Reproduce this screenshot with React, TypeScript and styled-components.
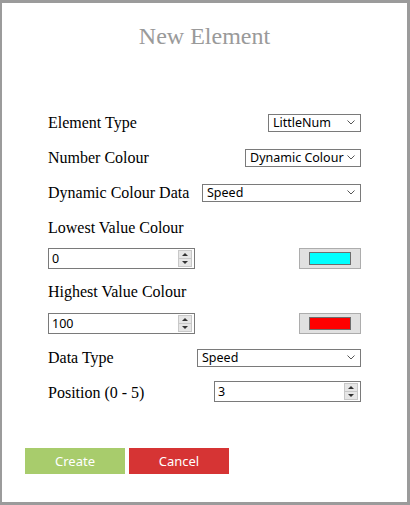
import React from "react";
import styled, { createGlobalStyle } from "styled-components";

const GlobalStyle = createGlobalStyle`
  html, body {
    margin: 0;
    padding: 0;
    background: #ffffff;
  }
`;

const Panel = styled.div`
  box-sizing: border-box;
  width: 410px;
  height: 505px;
  border: 3px solid #9b9b9b;
  border-left-width: 2px;
  background: #ffffff;
  font-family: "Liberation Serif", "Times New Roman", serif;
  color: #000;
`;

const Title = styled.h2`
  margin: 0;
  padding-top: 19px;
  height: 101px;
  box-sizing: border-box;
  text-align: center;
  font-weight: normal;
  font-size: 24px;
  line-height: 28px;
  color: #9a9a9a;
`;

const Form = styled.div`
  display: flex;
  flex-direction: column;
  width: 313px;
  margin-left: 46px;
`;

const Row = styled.div<{ $h: number }>`
  display: flex;
  align-items: center;
  justify-content: space-between;
  height: ${(p) => p.$h}px;
`;

const Label = styled.label`
  font-size: 16px;
  padding-top: 3px;
  white-space: nowrap;
`;

const SelectWrap = styled.div<{ $w: number }>`
  position: relative;
  width: ${(p) => p.$w}px;
  height: 18px;
`;

const Select = styled.select`
  appearance: none;
  box-sizing: border-box;
  width: 100%;
  height: 100%;
  margin: 0;
  padding: 0 14px 0 4px;
  border: 1px solid #7a7a7a;
  border-radius: 0;
  background: #ffffff;
  font-family: "Noto Sans", "Open Sans", sans-serif;
  font-size: 12.5px;
  line-height: 16px;
  color: #000;
  outline: none;
`;

const Chevron = styled.svg`
  position: absolute;
  right: 6px;
  top: 7px;
  width: 8px;
  height: 5px;
  pointer-events: none;
`;

const NumberBox = styled.div<{ $w: number }>`
  box-sizing: border-box;
  display: flex;
  align-items: center;
  width: ${(p) => p.$w}px;
  height: 21px;
  border: 1px solid #7a7a7a;
  background: #ffffff;
  padding-right: 2px;
`;

const NumberInput = styled.input`
  flex: 1;
  min-width: 0;
  border: none;
  outline: none;
  padding: 0 0 0 3px;
  background: transparent;
  font-family: "Noto Sans", "Open Sans", sans-serif;
  font-size: 12.5px;
  color: #000;
`;

const Spinner = styled.div`
  display: flex;
  flex-direction: column;
  width: 12px;
  height: 15px;
  border: 1px solid #c8c8c8;
  background: #e6e6e6;
`;

const SpinHalf = styled.div<{ $down?: boolean }>`
  flex: 1;
  display: flex;
  align-items: center;
  justify-content: center;
  border-top: ${(p) => (p.$down ? "1px solid #c8c8c8" : "none")};
  &::after {
    content: "";
    width: 0;
    height: 0;
    border-left: 3px solid transparent;
    border-right: 3px solid transparent;
    ${(p) =>
      p.$down
        ? "border-top: 3px solid #333;"
        : "border-bottom: 3px solid #333;"}
  }
`;

const ColourButton = styled.div`
  box-sizing: border-box;
  display: flex;
  align-items: center;
  justify-content: center;
  width: 62px;
  height: 21px;
  border: 1px solid #adadad;
  background: #e1e1e1;
`;

const Swatch = styled.div<{ $c: string }>`
  box-sizing: border-box;
  width: 42px;
  height: 13px;
  border: 1px solid #6d6d6d;
  background: ${(p) => p.$c};
`;

const Actions = styled.div`
  display: flex;
  gap: 4px;
  margin-top: 40px;
  margin-left: 23px;
`;

const Button = styled.button<{ $bg: string }>`
  width: 100px;
  height: 26px;
  border: none;
  border-radius: 0;
  background: ${(p) => p.$bg};
  color: #ffffff;
  font-family: "Noto Sans", "Open Sans", sans-serif;
  font-size: 13px;
  padding: 0;
`;

function Dropdown({ width, value }: { width: number; value: string }) {
  return (
    <SelectWrap $w={width}>
      <Select defaultValue={value}>
        <option>{value}</option>
      </Select>
      <Chevron viewBox="0 0 8 5">
        <path d="M0.5 0.5 L4 4 L7.5 0.5" fill="none" stroke="#555" strokeWidth="1" />
      </Chevron>
    </SelectWrap>
  );
}

function NumberField({ width, value }: { width: number; value: string }) {
  return (
    <NumberBox $w={width}>
      <NumberInput type="text" defaultValue={value} />
      <Spinner>
        <SpinHalf />
        <SpinHalf $down />
      </Spinner>
    </NumberBox>
  );
}

export default function App() {
  return (
    <>
      <GlobalStyle />
      <Panel>
        <Title>New Element</Title>
        <Form>
          <Row $h={35}>
            <Label>Element Type</Label>
            <Dropdown width={93} value="LittleNum" />
          </Row>
          <Row $h={35}>
            <Label>Number Colour</Label>
            <Dropdown width={116} value="Dynamic Colour" />
          </Row>
          <Row $h={35}>
            <Label>Dynamic Colour Data</Label>
            <Dropdown width={159} value="Speed" />
          </Row>
          <Row $h={35}>
            <Label>Lowest Value Colour</Label>
          </Row>
          <Row $h={29}>
            <NumberField width={147} value="0" />
            <ColourButton>
              <Swatch $c="#00ffff" />
            </ColourButton>
          </Row>
          <Row $h={34}>
            <Label>Highest Value Colour</Label>
          </Row>
          <Row $h={32}>
            <NumberField width={147} value="100" />
            <ColourButton>
              <Swatch $c="#ff0000" />
            </ColourButton>
          </Row>
          <Row $h={35}>
            <Label>Data Type</Label>
            <Dropdown width={164} value="Speed" />
          </Row>
          <Row $h={34}>
            <Label>Position (0 - 5)</Label>
            <NumberField width={147} value="3" />
          </Row>
        </Form>
        <Actions>
          <Button $bg="#a8cc6c">Create</Button>
          <Button $bg="#d63434">Cancel</Button>
        </Actions>
      </Panel>
    </>
  );
}
